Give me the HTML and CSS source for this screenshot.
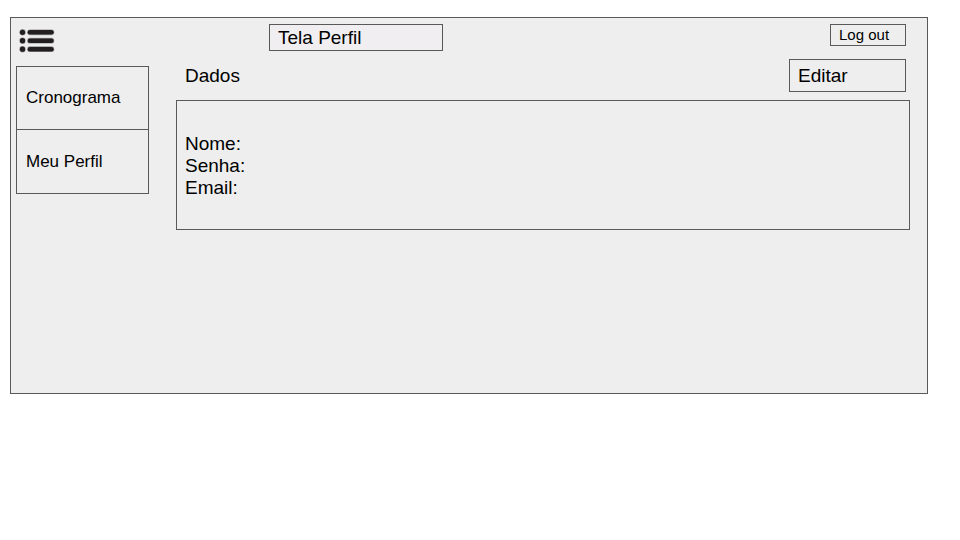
FILE: index.html
```html
<!DOCTYPE html>
<html lang="pt-BR">
<head>
<meta charset="utf-8">
<meta name="viewport" content="width=device-width, initial-scale=1">
<title>Tela Perfil</title>
<link rel="stylesheet" href="styles.css">
</head>
<body>
<div class="screen">
  <header class="topbar">
    <button class="menu" type="button" aria-label="Menu">
      <svg class="menu-icon" width="36" height="26" viewBox="0 0 36 26" aria-hidden="true">
        <g fill="#231f20" stroke="#231f20" stroke-opacity="0.4" stroke-width="1.2">
          <circle cx="3.5" cy="5.3" r="2.6"/>
          <circle cx="3.5" cy="13.7" r="2.6"/>
          <circle cx="3.5" cy="22.2" r="2.6"/>
          <rect x="8.7" y="3" width="26" height="4.6" rx="2.3"/>
          <rect x="8.7" y="11.4" width="26" height="4.6" rx="2.3"/>
          <rect x="8.7" y="19.9" width="26" height="4.6" rx="2.3"/>
        </g>
      </svg>
    </button>
    <div class="topbar-main">
      <h1 class="title box">Tela Perfil</h1>
      <button class="logout box" type="button">Log out</button>
    </div>
  </header>
  <div class="body">
    <nav class="sidebar box">
      <a class="nav-item" href="#cronograma">Cronograma</a>
      <a class="nav-item" href="#perfil">Meu Perfil</a>
    </nav>
    <main class="content">
      <div class="section-head">
        <h2 class="section-title">Dados</h2>
        <button class="edit box" type="button">Editar</button>
      </div>
      <section class="panel box">
        <p class="field">Nome:</p>
        <p class="field">Senha:</p>
        <p class="field">Email:</p>
      </section>
    </main>
  </div>
</div>
</body>
</html>
```
FILE: styles.css
```css
* {
  box-sizing: border-box;
}

body {
  margin: 17px 32px 17px 10px;
  background: #fff;
  color: #000;
  font-family: "Liberation Sans", Arial, sans-serif;
  font-size: 19px;
  line-height: 22px;
}

h1, h2, p {
  margin: 0;
  font-size: inherit;
  font-weight: normal;
}

button {
  margin: 0;
  color: inherit;
  font: inherit;
  text-align: left;
  background: none;
}

.box {
  border: 1px solid #595959;
}

.screen {
  padding: 6px 17px 163px 5px;
  background: #eee;
  border: 1px solid #595959;
}

.topbar,
.body {
  display: grid;
  grid-template-columns: 133px 1fr;
  column-gap: 27px;
}

.topbar {
  align-items: start;
  padding-bottom: 3px;
}

.menu {
  justify-self: start;
  padding: 3px;
  border: 0;
}

.menu-icon {
  display: block;
}

.topbar-main {
  display: flex;
  align-items: flex-start;
  justify-content: space-between;
  padding: 0 4px 0 93px;
}

.title {
  width: 174px;
  padding: 2px 8px 1px;
  background: #f0eef0;
}

.logout {
  width: 76px;
  padding: 0 8px;
  font-size: 15px;
  line-height: 20px;
}

.sidebar {
  align-self: start;
  margin-top: 7px;
}

.nav-item {
  display: block;
  padding: 20px 9px;
  color: inherit;
  font-size: 17px;
  text-decoration: none;
}

.nav-item + .nav-item {
  padding-top: 21px;
  border-top: 1px solid #595959;
}

.section-head {
  display: flex;
  align-items: center;
  justify-content: space-between;
  padding: 0 4px 8px 9px;
}

.edit {
  width: 117px;
  padding: 5px 8px 4px;
}

.panel {
  padding: 32px 8px 30px;
}
```
